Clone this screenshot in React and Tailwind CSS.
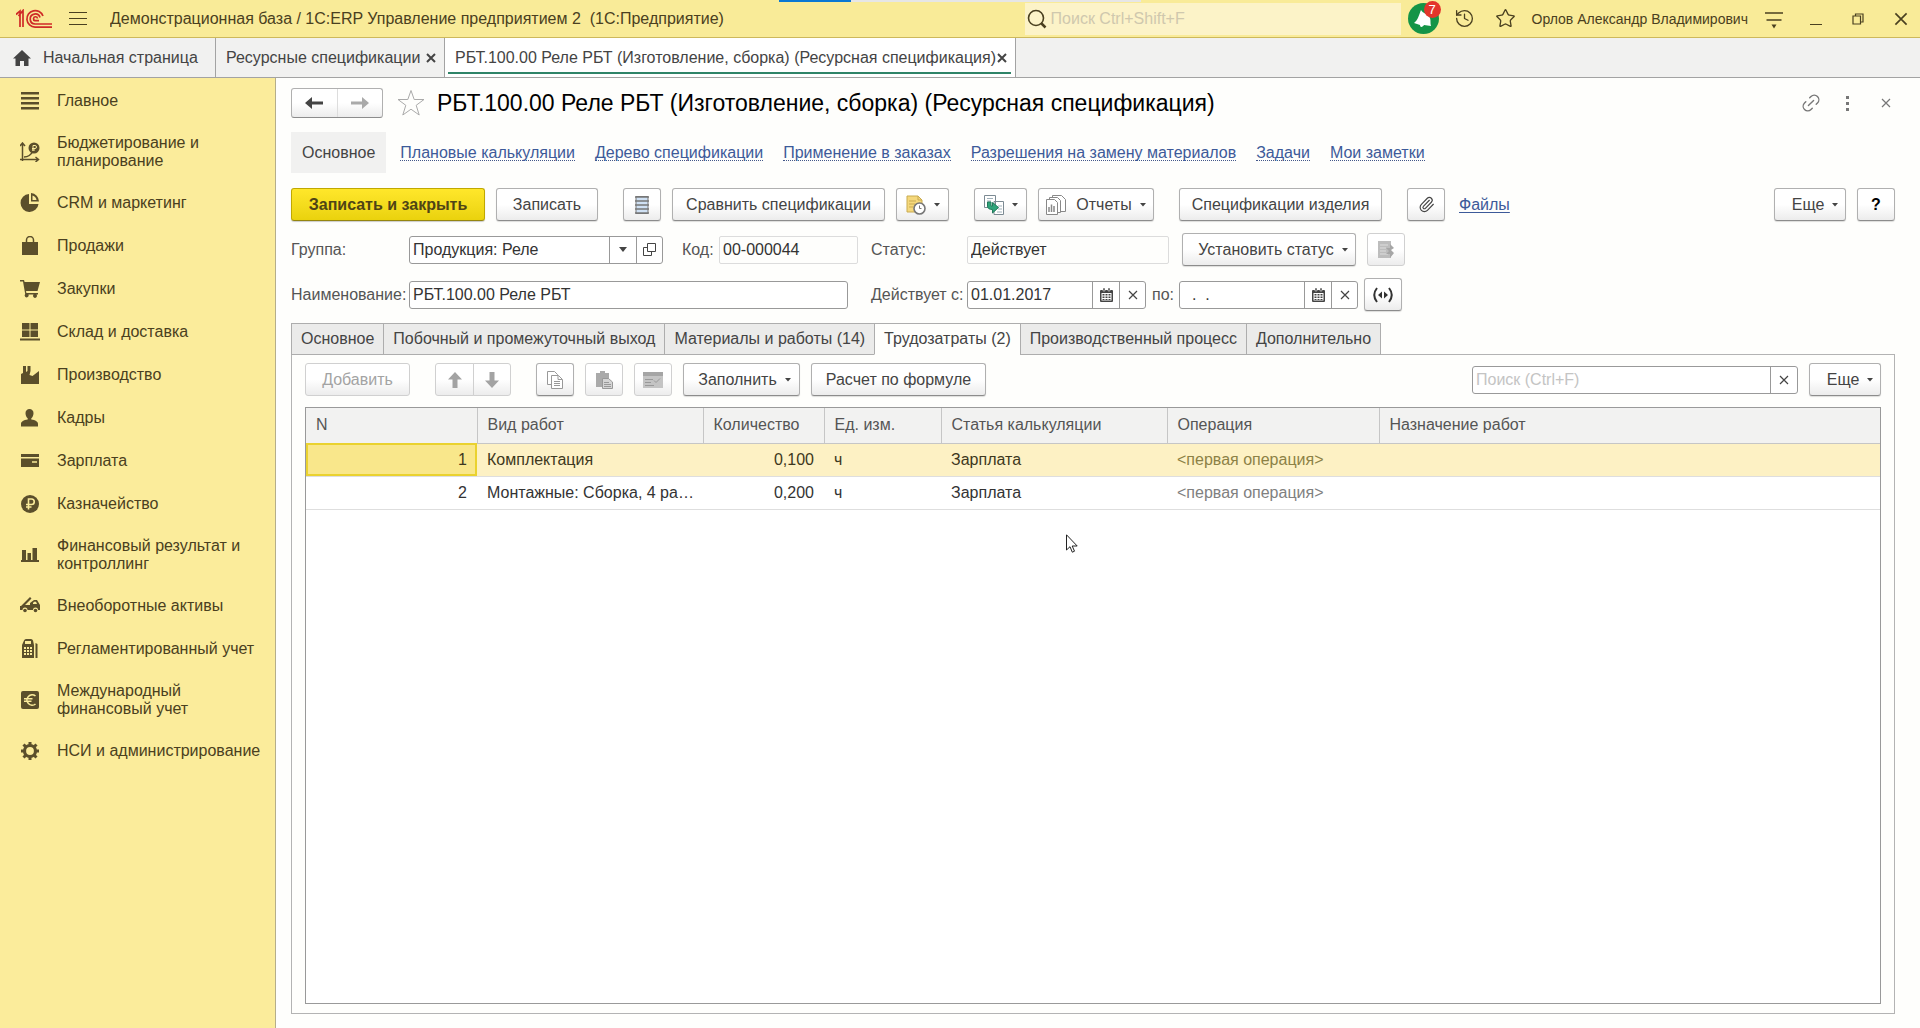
import React from 'react';
import clsx from 'clsx';
import { Star, History, Paperclip, Link2 } from 'lucide-react';

const SECTIONS = [
  { title: 'Главное', icon: 'main' },
  { title: 'Бюджетирование и планирование', icon: 'budget' },
  { title: 'CRM и маркетинг', icon: 'crm' },
  { title: 'Продажи', icon: 'bag' },
  { title: 'Закупки', icon: 'cart' },
  { title: 'Склад и доставка', icon: 'store' },
  { title: 'Производство', icon: 'factory' },
  { title: 'Кадры', icon: 'person' },
  { title: 'Зарплата', icon: 'card' },
  { title: 'Казначейство', icon: 'ruble' },
  { title: 'Финансовый результат и контроллинг', icon: 'chart' },
  { title: 'Внеоборотные активы', icon: 'truck' },
  { title: 'Регламентированный учет', icon: 'calc' },
  { title: 'Международный финансовый учет', icon: 'euro' },
  { title: 'НСИ и администрирование', icon: 'gear' }
];

const NAV_LINKS = [
  'Плановые калькуляции',
  'Дерево спецификации',
  'Применение в заказах',
  'Разрешения на замену материалов',
  'Задачи',
  'Мои заметки'
];

const FORM_TABS = [
  'Основное',
  'Побочный и промежуточный выход',
  'Материалы и работы (14)',
  'Трудозатраты (2)',
  'Производственный процесс',
  'Дополнительно'
];

const COLUMNS = ['N', 'Вид работ', 'Количество', 'Ед. изм.', 'Статья калькуляции', 'Операция', 'Назначение работ'];

const ROWS = [
  { n: 1, work: 'Комплектация', qty: '0,100', unit: 'ч', item: 'Зарплата', operation: '<первая операция>' },
  { n: 2, work: 'Монтажные: Сборка, 4 ра…', qty: '0,200', unit: 'ч', item: 'Зарплата', operation: '<первая операция>' }
];

const sectionShapes = {
  main: <path d="M1 1h18v2.4H1zM1 6h18v2.4H1zM1 11h18v2.4H1zM1 16h18v2.4H1z" />,
  budget: (
    <>
      <path d="M2.5 19V2M0 4l2.5-3L5 4M0 17.5h18M15.5 15l3 2.5-3 2.5M4 15c5 0 7-2 9-6" fill="none" stroke="currentColor" strokeWidth="1.5" />
      <circle cx="14" cy="6" r="5.5" />
      <path d="M13 9V3.500h2a1.500 1.500 0 0 1 0 3h-3M12 8h3" fill="none" stroke="#fbec9b" />
    </>
  ),
  crm: <path d="M9 1a9 9 0 1 0 9.500 10H9zM11 0v8.500h8A8.500 8.500 0 0 0 11 0zM12.500 2.500q3.500 1 4 4.500h-4z" fillRule="evenodd" />,
  bag: (
    <>
      <path d="M2 6h16v13H2z" />
      <path d="M6.500 9V4a3.500 3.500 0 0 1 7 0v5" fill="none" stroke="currentColor" strokeWidth="1.5" />
    </>
  ),
  cart: <path d="M0 1h4l.6 2H20l-2.500 9H6l.4 2H18v1.500h-1.500a2 2 0 1 1-3 0H8.500a2 2 0 1 1-3.300-.5L3 2.600H0z" />,
  store: <path d="M2 1h7.500v6.500H2zM10.500 1H18v6.500h-7.500zM2 8.500h7.500V15H2zM10.500 8.500H18V15h-7.500zM0 16.500h20v2H0z" />,
  factory: <path d="M1 19V9l2-1V1h3v6l1.500-1V1h3v5l-1 4 3 1 6.500-5v13z" />,
  person: <path d="M9.500 1a4 4 0 0 1 4 4.200c0 2-1 4.300-2.200 5.100v1.200c4 .6 6.700 2 6.700 4.500v2.500H1V16c0-2.500 2.700-3.900 6.700-4.500v-1.200C6.500 9.500 5.500 7.200 5.500 5.200A4 4 0 0 1 9.500 1z" />,
  card: (
    <>
      <path d="M1 3h18v3H1zM1 7.500h18V16H1z" />
      <path d="M12 11h5" stroke="#fbec9b" strokeWidth="1.5" />
    </>
  ),
  ruble: (
    <>
      <circle cx="10" cy="10" r="9" />
      <path d="M8.500 15.500V5h3a2.700 2.700 0 0 1 0 5.500H6M6 13h5.500" fill="none" stroke="#fbec9b" strokeWidth="1.6" />
    </>
  ),
  chart: <path d="M2 5h4v10h1.500V8H11v7h1.500V3H17v12h2v2H1v-2h1z" />,
  truck: (
    <>
      <path d="M1 10 10 1l1.500 1.500L5 9h5V7l4-3h3l3 5v5h-2a2.500 2.500 0 0 0-5 0H7.500a2.500 2.500 0 0 0-5 0H0v-4z" />
      <circle cx="5" cy="14.500" r="1.8" />
      <circle cx="15.500" cy="14.500" r="1.8" />
      <path d="M13 8h4l-1-2.200h-2L13 7z" fill="#fbec9b" />
    </>
  ),
  calc: (
    <>
      <path d="M2 6l2-4.500Q4.500 0 6 0h5q1.500 0 2 1.500L14 6v13H2zM15.500 4l2 1v14h-2z" />
      <path d="M5 2h6v3H5zM4 8h2v2H4zM7 8h2v2H7zM10 8h2v2h-2zM4 11h2v2H4zM7 11h2v2H7zM10 11h2v2h-2zM4 14h2v2H4zM7 14h2v2H7zM10 14h2v2h-2z" fill="#fbec9b" />
    </>
  ),
  euro: (
    <>
      <rect x="1" y="1" width="18" height="18" rx="2" />
      <path d="M15.500 6a5.200 5.200 0 1 0 0 8M4 8.700h8.500M4 11.300h7.500" fill="none" stroke="#fbec9b" strokeWidth="1.6" />
    </>
  ),
  gear: (
    <>
      <circle cx="10" cy="10" r="5.5" fill="none" stroke="currentColor" strokeWidth="3.2" />
      <path d="M10 1v3M10 16v3M1 10h3M16 10h3M3.500 3.500l2.300 2.300M14.200 14.200l2.300 2.300M3.500 16.500l2.300-2.300M14.200 5.800l2.300-2.300" stroke="currentColor" strokeWidth="3" />
    </>
  )
};

const SectionIcon = ({ name }) => (
  <svg viewBox="0 0 20 20" className="h-5 w-5 shrink-0 text-[#5b4f2b]" fill="currentColor" aria-hidden="true">
    {sectionShapes[name]}
  </svg>
);

const Caret = () => (
  <svg viewBox="0 0 6 4" className="h-1 w-1.5 shrink-0" fill="currentColor" aria-hidden="true">
    <path d="M0 0h6L3 3.5z" />
  </svg>
);

const Cross = ({ className, bold }) => (
  <svg viewBox="0 0 10 10" className={clsx('shrink-0', className)} fill="none" stroke="currentColor" aria-hidden="true">
    <path d="M1 1l8 8M9 1L1 9" strokeWidth={bold ? 2 : 1.2} />
  </svg>
);

const Button = ({ className, disabled, label, children }) => (
  <button
    type="button"
    disabled={disabled}
    aria-label={label}
    className={clsx(
      'flex h-[33px] shrink-0 items-center justify-center rounded-[3px] border bg-linear-to-b from-white from-50% to-[#ececec] whitespace-nowrap',
      disabled ? 'border-[#d0d0d0] text-[#a3a3a3]' : 'border-[#b0b0b0] border-b-[#8c8c8c] text-[#444] shadow-[0_1px_1px_#00000022]',
      className
    )}
  >
    {children}
  </button>
);

const CalendarIcon = () => (
  <svg viewBox="0 0 13 14" className="h-3.5 w-[13px]" aria-hidden="true">
    <path d="M1 2h11a1 1 0 0 1 1 1v10a1 1 0 0 1-1 1H1a1 1 0 0 1-1-1V3a1 1 0 0 1 1-1z" fill="#444" />
    <path d="M3 0h2v3H3zM8 0h2v3H8z" fill="#444" stroke="#fff" strokeWidth=".5" />
    <path d="M1.500 5h10v7.500h-10z" fill="#fff" />
    <path d="M2.500 6h2v1.500h-2zM5.500 6h2v1.500h-2zM8.500 6h2v1.500h-2zM2.500 8.500h2V10h-2zM5.500 8.500h2V10h-2zM8.500 8.500h2V10h-2zM2.500 11h2v1h-2zM5.500 11h2v1h-2zM8.500 11h2v1h-2z" fill="#444" />
  </svg>
);

const DateField = ({ id, value }) => (
  <div className="flex h-[28px] w-[179px] shrink-0 rounded-[3px] border border-[#999] bg-white">
    <input id={id} defaultValue={value} className="min-w-0 flex-1 px-[3px] whitespace-pre text-[#333] outline-none" />
    <button type="button" aria-label="Выбрать дату" className="flex w-[27px] items-center justify-center border-l border-[#999]">
      <CalendarIcon />
    </button>
    <button type="button" aria-label="Очистить" className="flex w-[26px] items-center justify-center border-l border-[#999] text-[#444]">
      <Cross className="h-2.5 w-2.5" />
    </button>
  </div>
);

const TitleBar = () => (
  <header className="relative flex h-[38px] shrink-0 items-center border-b border-[#cdb85c] bg-[#f9eb98] text-[#4a4020]">
    <div className="absolute top-0 left-[779px] flex h-0.5">
      <span className="w-[72px] bg-[#0a78d4]" />
      <span className="w-[290px] bg-[#e6e6e6]" />
    </div>
    <svg viewBox="0 0 36 20" className="ml-4 h-5 w-9 shrink-0" fill="none" stroke="#cf2a27" strokeWidth="1.7" aria-label="1С">
      <path d="M0 5.500L4 2v16M2.500 7L7 1.500V18" />
      <path d="M27 7a8.300 8.300 0 1 0-8 11.200h17M24 8.500a5 5 0 1 0-5 6.500h17" />
      <path d="M21.500 9.500a2 2 0 1 0-2.500 2.200h4" />
    </svg>
    <button type="button" aria-label="Меню" className="ml-4 flex w-5 shrink-0 flex-col gap-[5px] px-px">
      <span className="h-px w-full bg-[#4a4020]" />
      <span className="h-px w-full bg-[#4a4020]" />
      <span className="h-px w-full bg-[#4a4020]" />
    </button>
    <div className="ml-[22px] flex-1 truncate whitespace-pre">Демонстрационная база / 1С:ERP Управление предприятием 2  (1С:Предприятие)</div>
    <label className="flex h-8 w-[376px] shrink-0 items-center bg-[#fcf3c8] pl-0.5">
      <svg viewBox="0 0 20 20" className="h-5 w-5 shrink-0" fill="none" stroke="#4a4020" aria-hidden="true">
        <circle cx="9" cy="9" r="7.5" strokeWidth="1.6" />
        <path d="M14 14l4.500 4.500" strokeWidth="2.5" />
      </svg>
      <input aria-label="Поиск" placeholder="Поиск Ctrl+Shift+F" className="min-w-0 flex-1 pl-1 outline-none placeholder:text-[#cfc8ae]" />
    </label>
    <button type="button" aria-label="Уведомления" className="relative ml-[7px] h-[31px] w-[31px] shrink-0 rounded-full bg-[#149447]">
      <svg viewBox="0 0 31 31" className="h-full w-full" fill="#fff" aria-hidden="true">
        <path d="M6 20c4-3 5-8 7-13 2 4 7 3 9 8 1 3 0 5 1 8l-7-1c-1 2-4 3-4 0z" />
      </svg>
      <span className="absolute -top-0.5 left-4 flex h-[17px] w-[17px] items-center justify-center rounded-full bg-[#e3352b] text-[13px] text-white">7</span>
    </button>
    <button type="button" aria-label="История" className="ml-[15px] shrink-0">
      <History size={21} strokeWidth={1.5} />
    </button>
    <button type="button" aria-label="Избранное" className="ml-5 shrink-0">
      <Star size={21} strokeWidth={1.5} />
    </button>
    <div className="ml-4 shrink-0 text-[14px]">Орлов Александр Владимирович</div>
    <button type="button" aria-label="Настройки" className="ml-4 shrink-0">
      <svg viewBox="0 0 20 20" className="h-5 w-5" fill="none" stroke="currentColor" strokeWidth="1.5" aria-hidden="true">
        <path d="M1 4h18M2.500 11h15" />
        <path d="M7.500 15.500h5l-2.500 4z" fill="currentColor" stroke="none" />
      </svg>
    </button>
    <button type="button" aria-label="Свернуть" className="ml-[26px] flex h-3 w-3 shrink-0 items-end">
      <span className="h-px w-full bg-[#4a4020]" />
    </button>
    <button type="button" aria-label="Восстановить" className="ml-[30px] shrink-0">
      <svg viewBox="0 0 12 12" className="h-3 w-3" fill="none" stroke="currentColor" strokeWidth="1.2" aria-hidden="true">
        <path d="M1 3h7.500v8H1zM3.500 3V1H11v8H8.500" />
      </svg>
    </button>
    <button type="button" aria-label="Закрыть" className="mr-3 ml-[30px] shrink-0">
      <Cross className="h-3.5 w-3.5" />
    </button>
  </header>
);

const WindowTabs = () => (
  <nav className="flex h-[40px] shrink-0 border-b border-[#a3a3a3] bg-[#f1f1f0] text-[#444]">
    <button type="button" className="flex w-[216px] items-center border-r border-[#a3a3a3] pl-[13px]">
      <svg viewBox="0 0 18 16" className="h-4 w-[18px]" fill="#444" aria-hidden="true">
        <path d="M9 0l9 8.500h-2.500V16H11v-5H7v5H2.500V8.500H0z" />
      </svg>
      <span className="ml-3">Начальная страница</span>
    </button>
    <div className="flex w-[229px] items-center border-r border-[#a3a3a3] pr-2 pl-2.5">
      <button type="button" className="flex-1 text-left whitespace-nowrap">Ресурсные спецификации</button>
      <button type="button" aria-label="Закрыть вкладку">
        <Cross bold className="h-2.5 w-2.5" />
      </button>
    </div>
    <div className="relative flex w-[571px] items-center border-r border-[#a3a3a3] bg-white pr-2 pl-2.5">
      <button type="button" className="flex-1 text-left whitespace-nowrap">РБТ.100.00 Реле РБТ (Изготовление, сборка) (Ресурсная спецификация)</button>
      <button type="button" aria-label="Закрыть вкладку">
        <Cross bold className="h-2.5 w-2.5" />
      </button>
      <span className="absolute right-1 bottom-[3px] left-[3px] h-0.5 bg-[#2f8468]" />
    </div>
  </nav>
);

const Sidebar = () => (
  <aside className="w-[276px] shrink-0 border-r border-[#b5ae8a] bg-[#fbec9b] pt-0.5 leading-[18px] text-[#4a4020]">
    {SECTIONS.map((s) => (
      <button key={s.title} type="button" className="flex min-h-[43px] w-full items-center pt-[11px] pr-2 pb-3 pl-5 text-left">
        <SectionIcon name={s.icon} />
        <span className="ml-[17px] flex-1">{s.title}</span>
      </button>
    ))}
  </aside>
);

const FormHeader = () => (
  <div className="flex h-[30px] shrink-0 items-center">
    <div className="flex h-[30px] w-[92px] shrink-0 rounded-[3px] border border-[#b0b0b0] border-b-[#8c8c8c] bg-linear-to-b from-white from-50% to-[#ececec]">
      <button type="button" aria-label="Назад" className="flex flex-1 items-center justify-center border-r border-[#ddd] text-[#444]">
        <svg viewBox="0 0 18 12" className="h-3 w-[18px]" fill="currentColor" aria-hidden="true">
          <path d="M0 6l7-6v4.500h11v3H7V12z" />
        </svg>
      </button>
      <button type="button" aria-label="Вперед" className="flex flex-1 items-center justify-center text-[#aaa]">
        <svg viewBox="0 0 18 12" className="h-3 w-[18px]" fill="currentColor" aria-hidden="true">
          <path d="M18 6l-7-6v4.500H0v3h11V12z" />
        </svg>
      </button>
    </div>
    <button type="button" aria-label="В избранное" className="ml-3.5 shrink-0 text-[#aaa]">
      <svg viewBox="0 0 28 28" className="h-7 w-7" fill="none" stroke="currentColor" aria-hidden="true">
        <path d="M14 1.500l3.200 9H27l-7.800 5.800 3 9.700L14 20.200 5.800 26l3-9.700L1 10.500h9.800z" />
      </svg>
    </button>
    <h1 className="ml-3 flex-1 text-[23px] whitespace-nowrap text-black">РБТ.100.00 Реле РБТ (Изготовление, сборка) (Ресурсная спецификация)</h1>
    <button type="button" aria-label="Получить ссылку" className="text-[#777]">
      <Link2 size={22} strokeWidth={1.5} className="-rotate-45" />
    </button>
    <button type="button" aria-label="Дополнительно" className="ml-6 flex flex-col gap-[3px]">
      <span className="h-[3px] w-[3px] bg-[#777]" />
      <span className="h-[3px] w-[3px] bg-[#777]" />
      <span className="h-[3px] w-[3px] bg-[#777]" />
    </button>
    <button type="button" aria-label="Закрыть форму" className="mr-1 ml-8 text-[#777]">
      <Cross className="h-2.5 w-2.5" />
    </button>
  </div>
);

const FormNav = () => (
  <nav className="mt-3.5 flex h-[41px] shrink-0 items-center gap-5">
    <a href="#main" className="-mr-1.5 flex h-full items-center bg-[#f1f1f0] px-[11px] text-[#444]">Основное</a>
    {NAV_LINKS.map((t) => (
      <a key={t} href="#link" className="border-b border-dotted border-[#44588a] leading-[15px] whitespace-nowrap text-[#3d5a99]">
        {t}
      </a>
    ))}
  </nav>
);

const CommandBar = () => (
  <div className="mt-[15px] flex shrink-0 items-center">
    <button
      type="button"
      className="h-[33px] w-[194px] shrink-0 rounded-[3px] border border-[#c0a800] border-b-[#94850f] bg-linear-to-b from-[#ffe72a] to-[#ead20c] font-bold whitespace-nowrap text-[#4f4415] shadow-[0_1px_1px_#00000033]"
    >
      Записать и закрыть
    </button>
    <Button className="ml-[11px] w-[102px]">Записать</Button>
    <Button className="ml-[25px] w-[38px]" label="Реестр">
      <svg viewBox="0 0 14 18" className="h-[18px] w-3.5" aria-hidden="true">
        <path d="M1 .5h12v17H1z" fill="#cfe0f3" stroke="#777" />
        <path d="M0 1h14M0 5h14M0 9h14M0 13h14M0 17h14" stroke="#777" strokeWidth="1.4" />
      </svg>
    </Button>
    <Button className="ml-[11px] w-[213px]">Сравнить спецификации</Button>
    <Button className="ml-[11px] w-[53px] gap-2" label="Напоминание">
      <svg viewBox="0 0 20 20" className="h-5 w-5" aria-hidden="true">
        <path d="M1 1h11l4 4v12H1z" fill="#f5d87c" stroke="#c9ab50" />
        <path d="M12 1v4h4M3 6h7M3 9h6M3 12h4" fill="none" stroke="#c9ab50" />
        <circle cx="13.500" cy="13.500" r="5.500" fill="#fff" stroke="#777" strokeWidth="1.6" />
        <path d="M13.500 10.500v3h2" fill="none" stroke="#777" />
      </svg>
      <Caret />
    </Button>
    <Button className="ml-[25px] w-[53px] gap-2" label="Создать на основании">
      <svg viewBox="0 0 20 20" className="h-5 w-5" aria-hidden="true">
        <path d="M.5.5h11v12H.5zM10 6.500h9.500v13H10z" fill="#fff" stroke="#7c8a93" />
        <path d="M3 3.500h6M3 6h4M14 11h4M14 14h4M13 17h5" stroke="#9fb0ba" />
        <path d="M3.500 7v4q0 3.500 5 3.500V18l6-5.500-6-5v3.500H7V7z" fill="#2fa37a" stroke="#217a5b" />
      </svg>
      <Caret />
    </Button>
    <Button className="ml-[11px] w-[116px]">
      <svg viewBox="0 0 20 20" className="h-5 w-5" fill="#fff" stroke="#888" aria-hidden="true">
        <path d="M6.500.5h9l4 4v12h-13z" />
        <path d="M3.500 2.500h8l3 3v12h-11z" />
        <path d="M.5 4.500h8l3 3v12H.5z" />
        <path d="M3 17v-5M5.500 17V9.500M8 17v-6" strokeWidth="1.5" />
      </svg>
      <span className="mr-2 ml-2.5">Отчеты</span>
      <Caret />
    </Button>
    <Button className="ml-[25px] w-[203px]">Спецификации изделия</Button>
    <Button className="ml-[25px] w-[38px]" label="Присоединенные файлы">
      <Paperclip size={17} strokeWidth={1.6} />
    </Button>
    <a href="#files" className="ml-3.5 leading-[17px] text-[#3d5a99] underline underline-offset-2">Файлы</a>
    <Button className="ml-auto w-[72px] gap-2 pl-2.5">
      Еще
      <Caret />
    </Button>
    <Button className="ml-[11px] w-[38px] font-bold text-black" label="Справка">?</Button>
  </div>
);

const Fields = () => (
  <>
    <div className="mt-3 flex h-[33px] shrink-0 items-center text-[#555]">
      <label htmlFor="group" className="w-[118px] shrink-0">Группа:</label>
      <div className="flex h-[28px] w-[254px] shrink-0 rounded-[3px] border border-[#999] bg-white">
        <input id="group" defaultValue="Продукция: Реле" className="min-w-0 flex-1 px-[3px] text-[#333] outline-none" />
        <button type="button" aria-label="Выбрать" className="flex w-[27px] items-center justify-center border-l border-[#999] text-[#444]">
          <svg viewBox="0 0 8 5" className="h-[5px] w-2" fill="currentColor" aria-hidden="true">
            <path d="M0 0h8L4 5z" />
          </svg>
        </button>
        <button type="button" aria-label="Открыть" className="flex w-[26px] items-center justify-center border-l border-[#999] text-[#444]">
          <svg viewBox="0 0 13 13" className="h-[13px] w-[13px]" fill="none" stroke="currentColor" aria-hidden="true">
            <path d="M4.500.5h8v8h-8zM4.500 4.500h-4v8h8v-4" />
          </svg>
        </button>
      </div>
      <label htmlFor="code" className="ml-[19px] w-[37px] shrink-0">Код:</label>
      <input id="code" readOnly defaultValue="00-000044" className="h-[28px] w-[139px] shrink-0 rounded-[2px] border border-[#dcdcdc] px-[3px] text-[#333] outline-none" />
      <label htmlFor="status" className="ml-[13px] w-[96px] shrink-0">Статус:</label>
      <input id="status" readOnly defaultValue="Действует" className="h-[28px] w-[202px] shrink-0 rounded-[2px] border border-[#dcdcdc] px-[3px] text-[#333] outline-none" />
      <Button className="ml-[13px] w-[174px] gap-2 pl-2">
        Установить статус
        <Caret />
      </Button>
      <Button disabled className="ml-[11px] w-[38px]" label="Изменить статус">
        <svg viewBox="0 0 18 20" className="h-5 w-[18px]" aria-hidden="true">
          <path d="M1 1h13v17H1z" fill="#bdbdbd" />
          <path d="M3 5h8M3 8h6M3 11h6M3 14h8" stroke="#dedede" />
          <path d="M9 8h4V4l4 4-3 2 3 3-4 5v-4H9l3-3z" fill="#a6a6a6" />
        </svg>
      </Button>
    </div>
    <div className="mt-3 flex h-[33px] shrink-0 items-center text-[#555]">
      <label htmlFor="name" className="w-[118px] shrink-0">Наименование:</label>
      <input id="name" defaultValue="РБТ.100.00 Реле РБТ" className="h-[28px] w-[439px] shrink-0 rounded-[3px] border border-[#999] bg-white px-[3px] text-[#333] outline-none" />
      <label htmlFor="from" className="ml-[23px] w-[96px] shrink-0 whitespace-nowrap">Действует с:</label>
      <DateField id="from" value="01.01.2017" />
      <label htmlFor="to" className="ml-1.5 w-[27px] shrink-0">по:</label>
      <DateField id="to" value="  .  ." />
      <Button className="ml-1.5 w-[38px]" label="Период">
        <svg viewBox="0 0 20 16" className="h-4 w-5" fill="none" stroke="#333" strokeWidth="2" aria-hidden="true">
          <path d="M4 1Q-1.500 8 4 15M16 1q5.500 7 0 14" />
          <path d="M9 4.500v7L5 8zM11 4.500v7L15 8z" fill="#333" stroke="none" />
        </svg>
      </Button>
    </div>
  </>
);

const ItemsToolbar = () => (
  <div className="flex shrink-0 items-center">
    <Button disabled className="w-[105px]">Добавить</Button>
    <div className="ml-[25px] flex">
      <Button disabled className="w-[39px] rounded-r-none" label="Переместить вверх">
        <svg viewBox="0 0 16 16" className="h-4 w-4" fill="currentColor" aria-hidden="true">
          <path d="M8 0l7 7.500h-4.500V16h-5V7.500H1z" />
        </svg>
      </Button>
      <Button disabled className="-ml-px w-[38px] rounded-l-none" label="Переместить вниз">
        <svg viewBox="0 0 16 16" className="h-4 w-4" fill="currentColor" aria-hidden="true">
          <path d="M8 16l7-7.500h-4.500V0h-5v8.500H1z" />
        </svg>
      </Button>
    </div>
    <Button className="ml-[25px] w-[38px]" label="Копировать">
      <svg viewBox="0 0 18 18" className="h-[18px] w-[18px]" fill="#fff" stroke="#999" aria-hidden="true">
        <path d="M1.500.5h7l3 3v10h-10z" />
        <path d="M5.500 4.500h7l4 4v9h-11z" />
        <path d="M12 4.500v4h4M8 10.500h6M8 12.500h6M8 14.500h6" fill="none" />
      </svg>
    </Button>
    <Button disabled className="ml-[11px] w-[38px]" label="Вставить">
      <svg viewBox="0 0 18 18" className="h-[18px] w-[18px]" aria-hidden="true">
        <path d="M1 2h4V0h5v2h4v14H1z" fill="#aaa" />
        <path d="M7.500 7.500h6l4 3.500v6.500h-10z" fill="#d5d5d5" stroke="#999" />
        <path d="M9 11.500h5M9 13.500h7M9 15.500h7" stroke="#999" />
      </svg>
    </Button>
    <Button disabled className="ml-[11px] w-[38px]" label="Карточка">
      <svg viewBox="0 0 20 16" className="h-4 w-5" aria-hidden="true">
        <path d="M0 0h20v16H0z" fill="#c4c4c4" />
        <path d="M0 0h20v4H0z" fill="#a5a5a5" />
        <path d="M2 7.500h8M2 10.500h6M2 13.500h9M11 8.500l2 2 4-4" fill="none" stroke="#999" />
      </svg>
    </Button>
    <Button className="ml-[11px] w-[117px] gap-2 pl-1.5">
      Заполнить
      <Caret />
    </Button>
    <Button className="ml-[11px] w-[175px]">Расчет по формуле</Button>
    <div className="ml-auto flex h-[28px] w-[326px] rounded-[3px] border border-[#999] bg-white">
      <input aria-label="Поиск в таблице" placeholder="Поиск (Ctrl+F)" className="min-w-0 flex-1 px-[3px] outline-none placeholder:text-[#c4c4c4]" />
      <button type="button" aria-label="Очистить поиск" className="flex w-[27px] items-center justify-center border-l border-[#999] text-[#444]">
        <Cross className="h-2.5 w-2.5" />
      </button>
    </div>
    <Button className="ml-[11px] w-[72px] gap-2 pl-2.5">
      Еще
      <Caret />
    </Button>
  </div>
);

const WorksTable = () => (
  <div className="relative mt-[11px] flex-1 border border-[#999] bg-white">
    <table className="w-full table-fixed border-collapse text-left">
      <colgroup>
        <col className="w-[171px]" />
        <col className="w-[226px]" />
        <col className="w-[121px]" />
        <col className="w-[117px]" />
        <col className="w-[226px]" />
        <col className="w-[212px]" />
        <col />
      </colgroup>
      <thead>
        <tr className="h-[35px] border-b border-[#c6c6c6] bg-[#f2f2f1] text-[#555]">
          {COLUMNS.map((c) => (
            <th key={c} className="border-r border-[#c6c6c6] px-2.5 font-normal whitespace-nowrap last:border-r-0">{c}</th>
          ))}
        </tr>
      </thead>
      <tbody>
        {ROWS.map((r) => {
          const selected = r.n === 1;
          return (
            <tr key={r.n} className={clsx('h-[33px] border-b border-[#dedede]', selected ? 'bg-[#fdf1c4] text-[#3d3820]' : 'text-[#333]')}>
              <td className={clsx('px-2.5 text-right', selected && 'bg-[#f9e78b] outline-2 -outline-offset-2 outline-[#ead22f]')}>{r.n}</td>
              <td className="pl-2.5 whitespace-nowrap">{r.work}</td>
              <td className="px-2.5 text-right">{r.qty}</td>
              <td className="px-2.5">{r.unit}</td>
              <td className="px-2.5">{r.item}</td>
              <td className={clsx('px-2.5', selected ? 'text-[#8c8146]' : 'text-[#808080]')}>{r.operation}</td>
              <td />
            </tr>
          );
        })}
      </tbody>
    </table>
    {/* Mouse pointer */}
    <svg viewBox="0 0 12 19" className="absolute top-[126px] left-[760px] h-[19px] w-3" fill="#fff" stroke="#222" aria-hidden="true">
      <path d="M.5.8v15.200l3.500-3.300 2.300 5.500 2.200-1-2.300-5.200h5z" />
    </svg>
  </div>
);

const App = () => {
  return (
    <div className="flex min-h-screen flex-col bg-[#fefefc] font-['Liberation_Sans',Arial,sans-serif] text-[16px] leading-5">
      <TitleBar />
      <WindowTabs />
      <div className="flex flex-1">
        <Sidebar />
        <main className="flex min-w-0 flex-1 flex-col pt-2.5 pr-[25px] pb-3.5 pl-[15px]">
          <FormHeader />
          <FormNav />
          <CommandBar />
          <Fields />

          {/* Form pages */}
          <div role="tablist" className="relative mt-3 flex h-[32px] shrink-0">
            {FORM_TABS.map((t) => {
              const active = t.startsWith('Трудозатраты');
              return (
                <button
                  key={t}
                  type="button"
                  role="tab"
                  aria-selected={active}
                  className={clsx(
                    '-mr-px border border-[#adadad] px-[9px] whitespace-nowrap text-[#444]',
                    active ? 'border-b-[#fefefc] bg-[#fefefc]' : 'bg-[#ebebea]'
                  )}
                >
                  {t}
                </button>
              );
            })}
          </div>
          <section className="-mt-px flex flex-1 flex-col border border-[#b3b3b3] px-[13px] pt-2 pb-[9px]">
            <ItemsToolbar />
            <WorksTable />
          </section>
        </main>
      </div>
    </div>
  );
};

export default App;
